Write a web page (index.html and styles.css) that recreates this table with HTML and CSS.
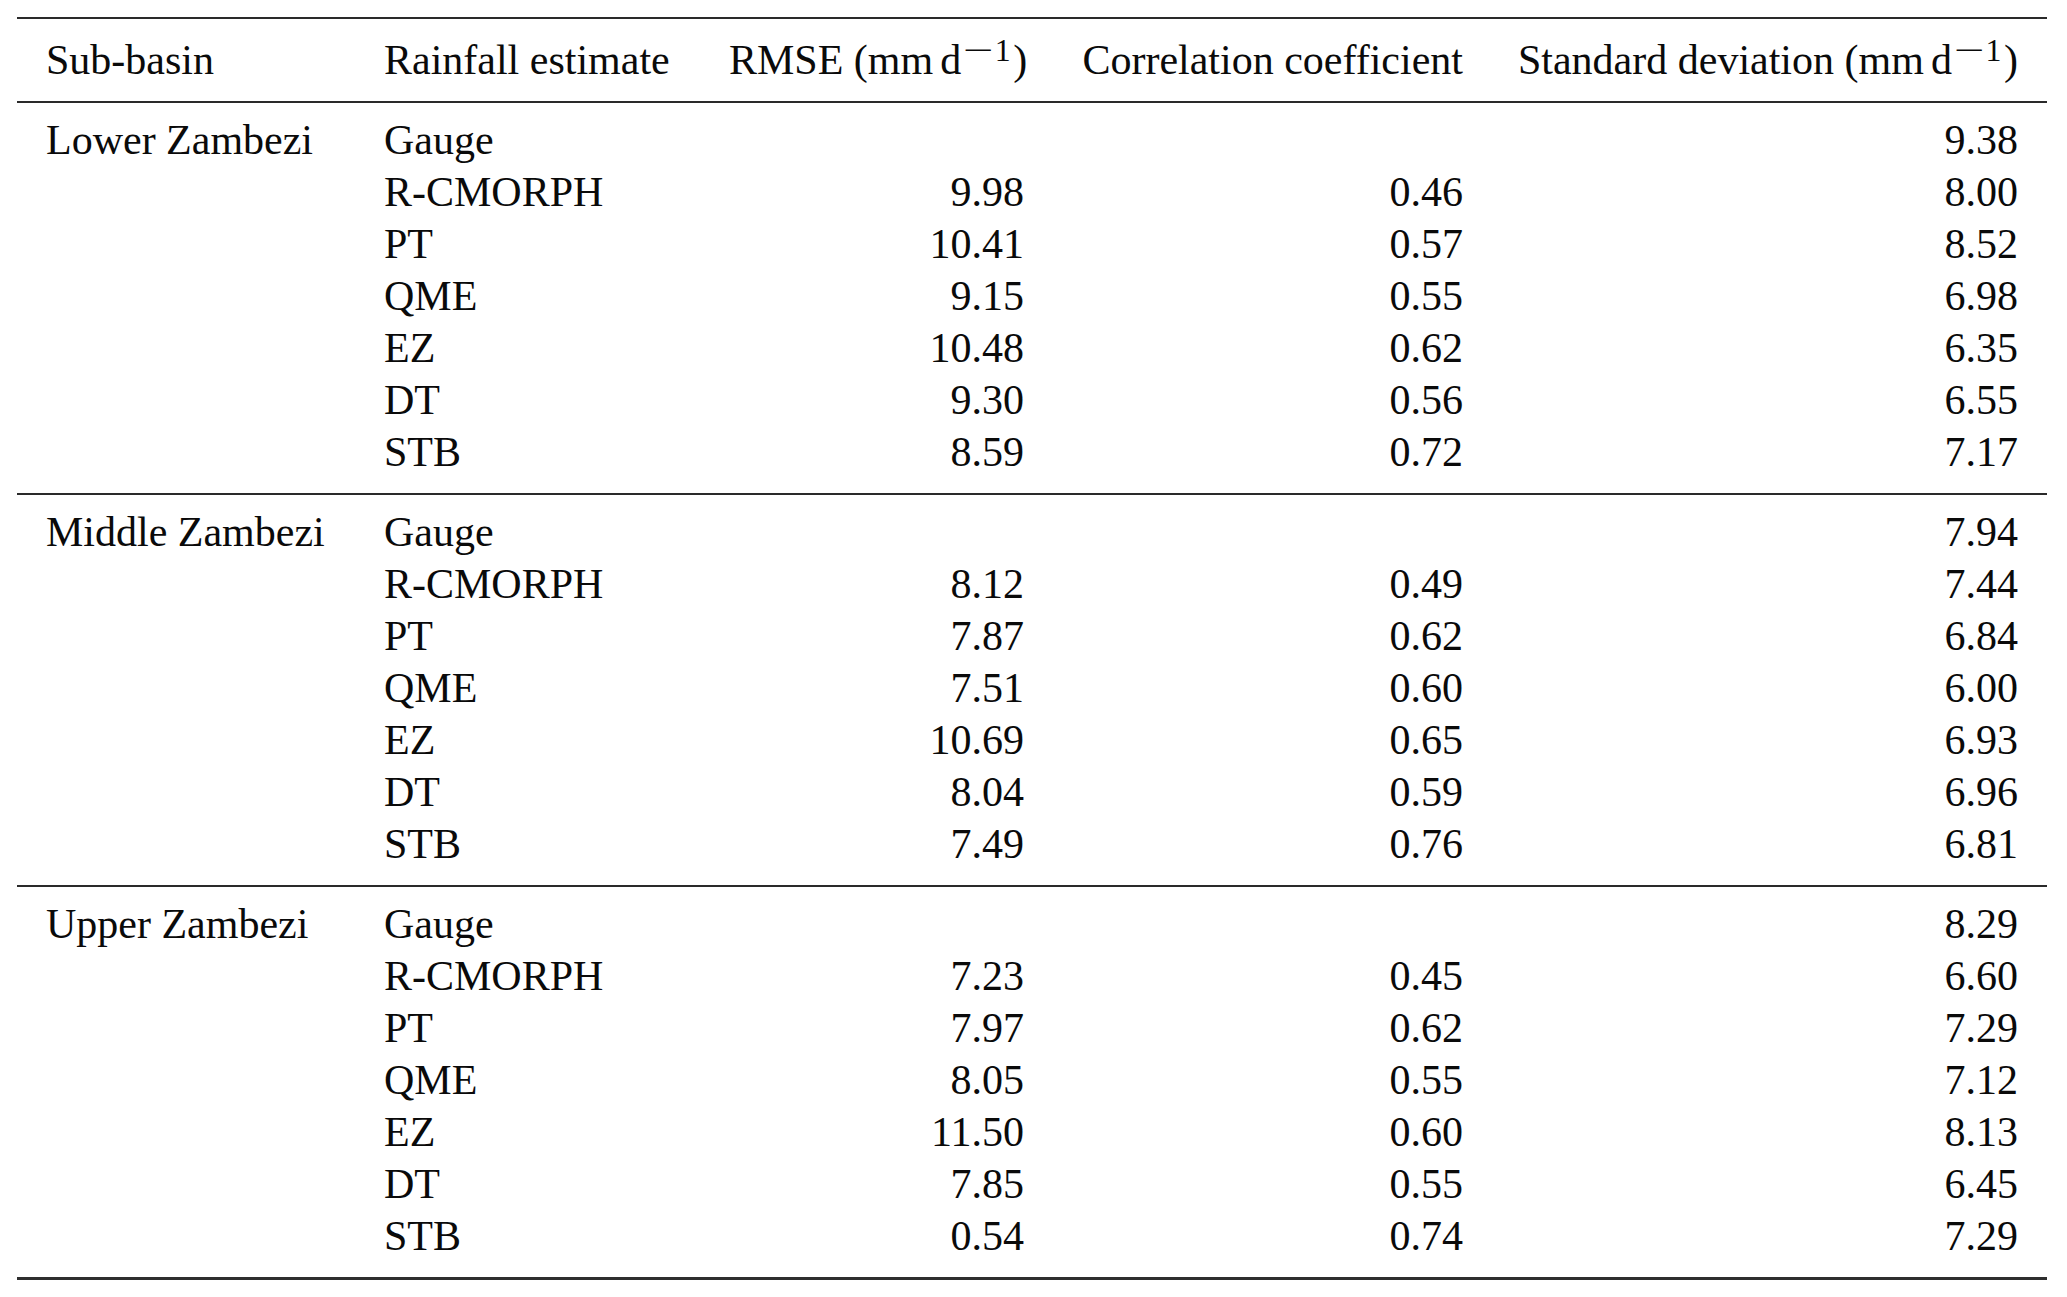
FILE: index.html
```html
<!DOCTYPE html>
<html lang="en">
<head>
<meta charset="utf-8">
<title>Rainfall estimates by sub-basin</title>
<link rel="stylesheet" href="styles.css">
</head>
<body>
<table class="stats">
  <colgroup>
    <col class="w1"><col class="w2"><col class="w3"><col class="w4"><col class="w5">
  </colgroup>
  <thead>
    <tr>
      <th class="c1">Sub-basin</th>
      <th class="c2">Rainfall estimate</th>
      <th class="num">RMSE (mm<span class="thin"></span>d<sup><span class="minus">−</span>1</sup>)</th>
      <th class="num">Correlation coefficient</th>
      <th class="num c5">Standard deviation (mm<span class="thin"></span>d<sup><span class="minus">−</span>1</sup>)</th>
    </tr>
  </thead>
  <tbody>
    <tr><td class="c1">Lower Zambezi</td><td class="c2">Gauge</td><td class="num"></td><td class="num"></td><td class="num c5">9.38</td></tr>
    <tr><td class="c1"></td><td class="c2">R-CMORPH</td><td class="num">9.98</td><td class="num">0.46</td><td class="num c5">8.00</td></tr>
    <tr><td class="c1"></td><td class="c2">PT</td><td class="num">10.41</td><td class="num">0.57</td><td class="num c5">8.52</td></tr>
    <tr><td class="c1"></td><td class="c2">QME</td><td class="num">9.15</td><td class="num">0.55</td><td class="num c5">6.98</td></tr>
    <tr><td class="c1"></td><td class="c2">EZ</td><td class="num">10.48</td><td class="num">0.62</td><td class="num c5">6.35</td></tr>
    <tr><td class="c1"></td><td class="c2">DT</td><td class="num">9.30</td><td class="num">0.56</td><td class="num c5">6.55</td></tr>
    <tr><td class="c1"></td><td class="c2">STB</td><td class="num">8.59</td><td class="num">0.72</td><td class="num c5">7.17</td></tr>
  </tbody>
  <tbody>
    <tr><td class="c1">Middle Zambezi</td><td class="c2">Gauge</td><td class="num"></td><td class="num"></td><td class="num c5">7.94</td></tr>
    <tr><td class="c1"></td><td class="c2">R-CMORPH</td><td class="num">8.12</td><td class="num">0.49</td><td class="num c5">7.44</td></tr>
    <tr><td class="c1"></td><td class="c2">PT</td><td class="num">7.87</td><td class="num">0.62</td><td class="num c5">6.84</td></tr>
    <tr><td class="c1"></td><td class="c2">QME</td><td class="num">7.51</td><td class="num">0.60</td><td class="num c5">6.00</td></tr>
    <tr><td class="c1"></td><td class="c2">EZ</td><td class="num">10.69</td><td class="num">0.65</td><td class="num c5">6.93</td></tr>
    <tr><td class="c1"></td><td class="c2">DT</td><td class="num">8.04</td><td class="num">0.59</td><td class="num c5">6.96</td></tr>
    <tr><td class="c1"></td><td class="c2">STB</td><td class="num">7.49</td><td class="num">0.76</td><td class="num c5">6.81</td></tr>
  </tbody>
  <tbody class="last">
    <tr><td class="c1">Upper Zambezi</td><td class="c2">Gauge</td><td class="num"></td><td class="num"></td><td class="num c5">8.29</td></tr>
    <tr><td class="c1"></td><td class="c2">R-CMORPH</td><td class="num">7.23</td><td class="num">0.45</td><td class="num c5">6.60</td></tr>
    <tr><td class="c1"></td><td class="c2">PT</td><td class="num">7.97</td><td class="num">0.62</td><td class="num c5">7.29</td></tr>
    <tr><td class="c1"></td><td class="c2">QME</td><td class="num">8.05</td><td class="num">0.55</td><td class="num c5">7.12</td></tr>
    <tr><td class="c1"></td><td class="c2">EZ</td><td class="num">11.50</td><td class="num">0.60</td><td class="num c5">8.13</td></tr>
    <tr><td class="c1"></td><td class="c2">DT</td><td class="num">7.85</td><td class="num">0.55</td><td class="num c5">6.45</td></tr>
    <tr><td class="c1"></td><td class="c2">STB</td><td class="num">0.54</td><td class="num">0.74</td><td class="num c5">7.29</td></tr>
  </tbody>
</table>
</body>
</html>
```

FILE: styles.css
```css
html, body {
  margin: 0;
  padding: 0;
  background: #ffffff;
}

body {
  font-family: "Liberation Serif", "Times New Roman", serif;
  font-size: 42px;
  color: #0a0a0a;
}

.stats {
  margin: 17px 0 0 17px;
  width: 2030px;
  table-layout: fixed;
  border-collapse: collapse;
  border-spacing: 0;
  border-top: 2px solid #2a2a2a;
  border-bottom: 3px solid #2e2e2e;
}

.w1 { width: 367px; }
.w2 { width: 345px; }
.w3 { width: 295px; }
.w4 { width: 439px; }
.w5 { width: 584px; }

.stats th,
.stats td {
  padding: 0;
  height: 52px;
  line-height: 52px;
  font-weight: normal;
  white-space: nowrap;
  vertical-align: baseline;
  text-align: left;
}

.stats .c1 { padding-left: 29px; }
.stats .num { text-align: right; }
.stats .c5 { padding-right: 29px; }

.stats thead th {
  padding-top: 15px;
  padding-bottom: 15px;
  border-bottom: 2px solid #2a2a2a;
}

.stats tbody {
  border-bottom: 2px solid #2a2a2a;
}

.stats tbody.last {
  border-bottom: 3px solid #2e2e2e;
}

.stats tbody tr:first-child td { padding-top: 11px; }
.stats tbody tr:last-child td { padding-bottom: 15px; }

.thin {
  display: inline-block;
  width: 0.17em;
}

sup {
  font-size: 0.76em;
  line-height: 0;
  vertical-align: 0.42em;
  padding-right: 0.08em;
}

sup .minus {
  display: inline-block;
  width: 1.05em;
  text-align: center;
  transform: scaleX(1.7);
}
```
